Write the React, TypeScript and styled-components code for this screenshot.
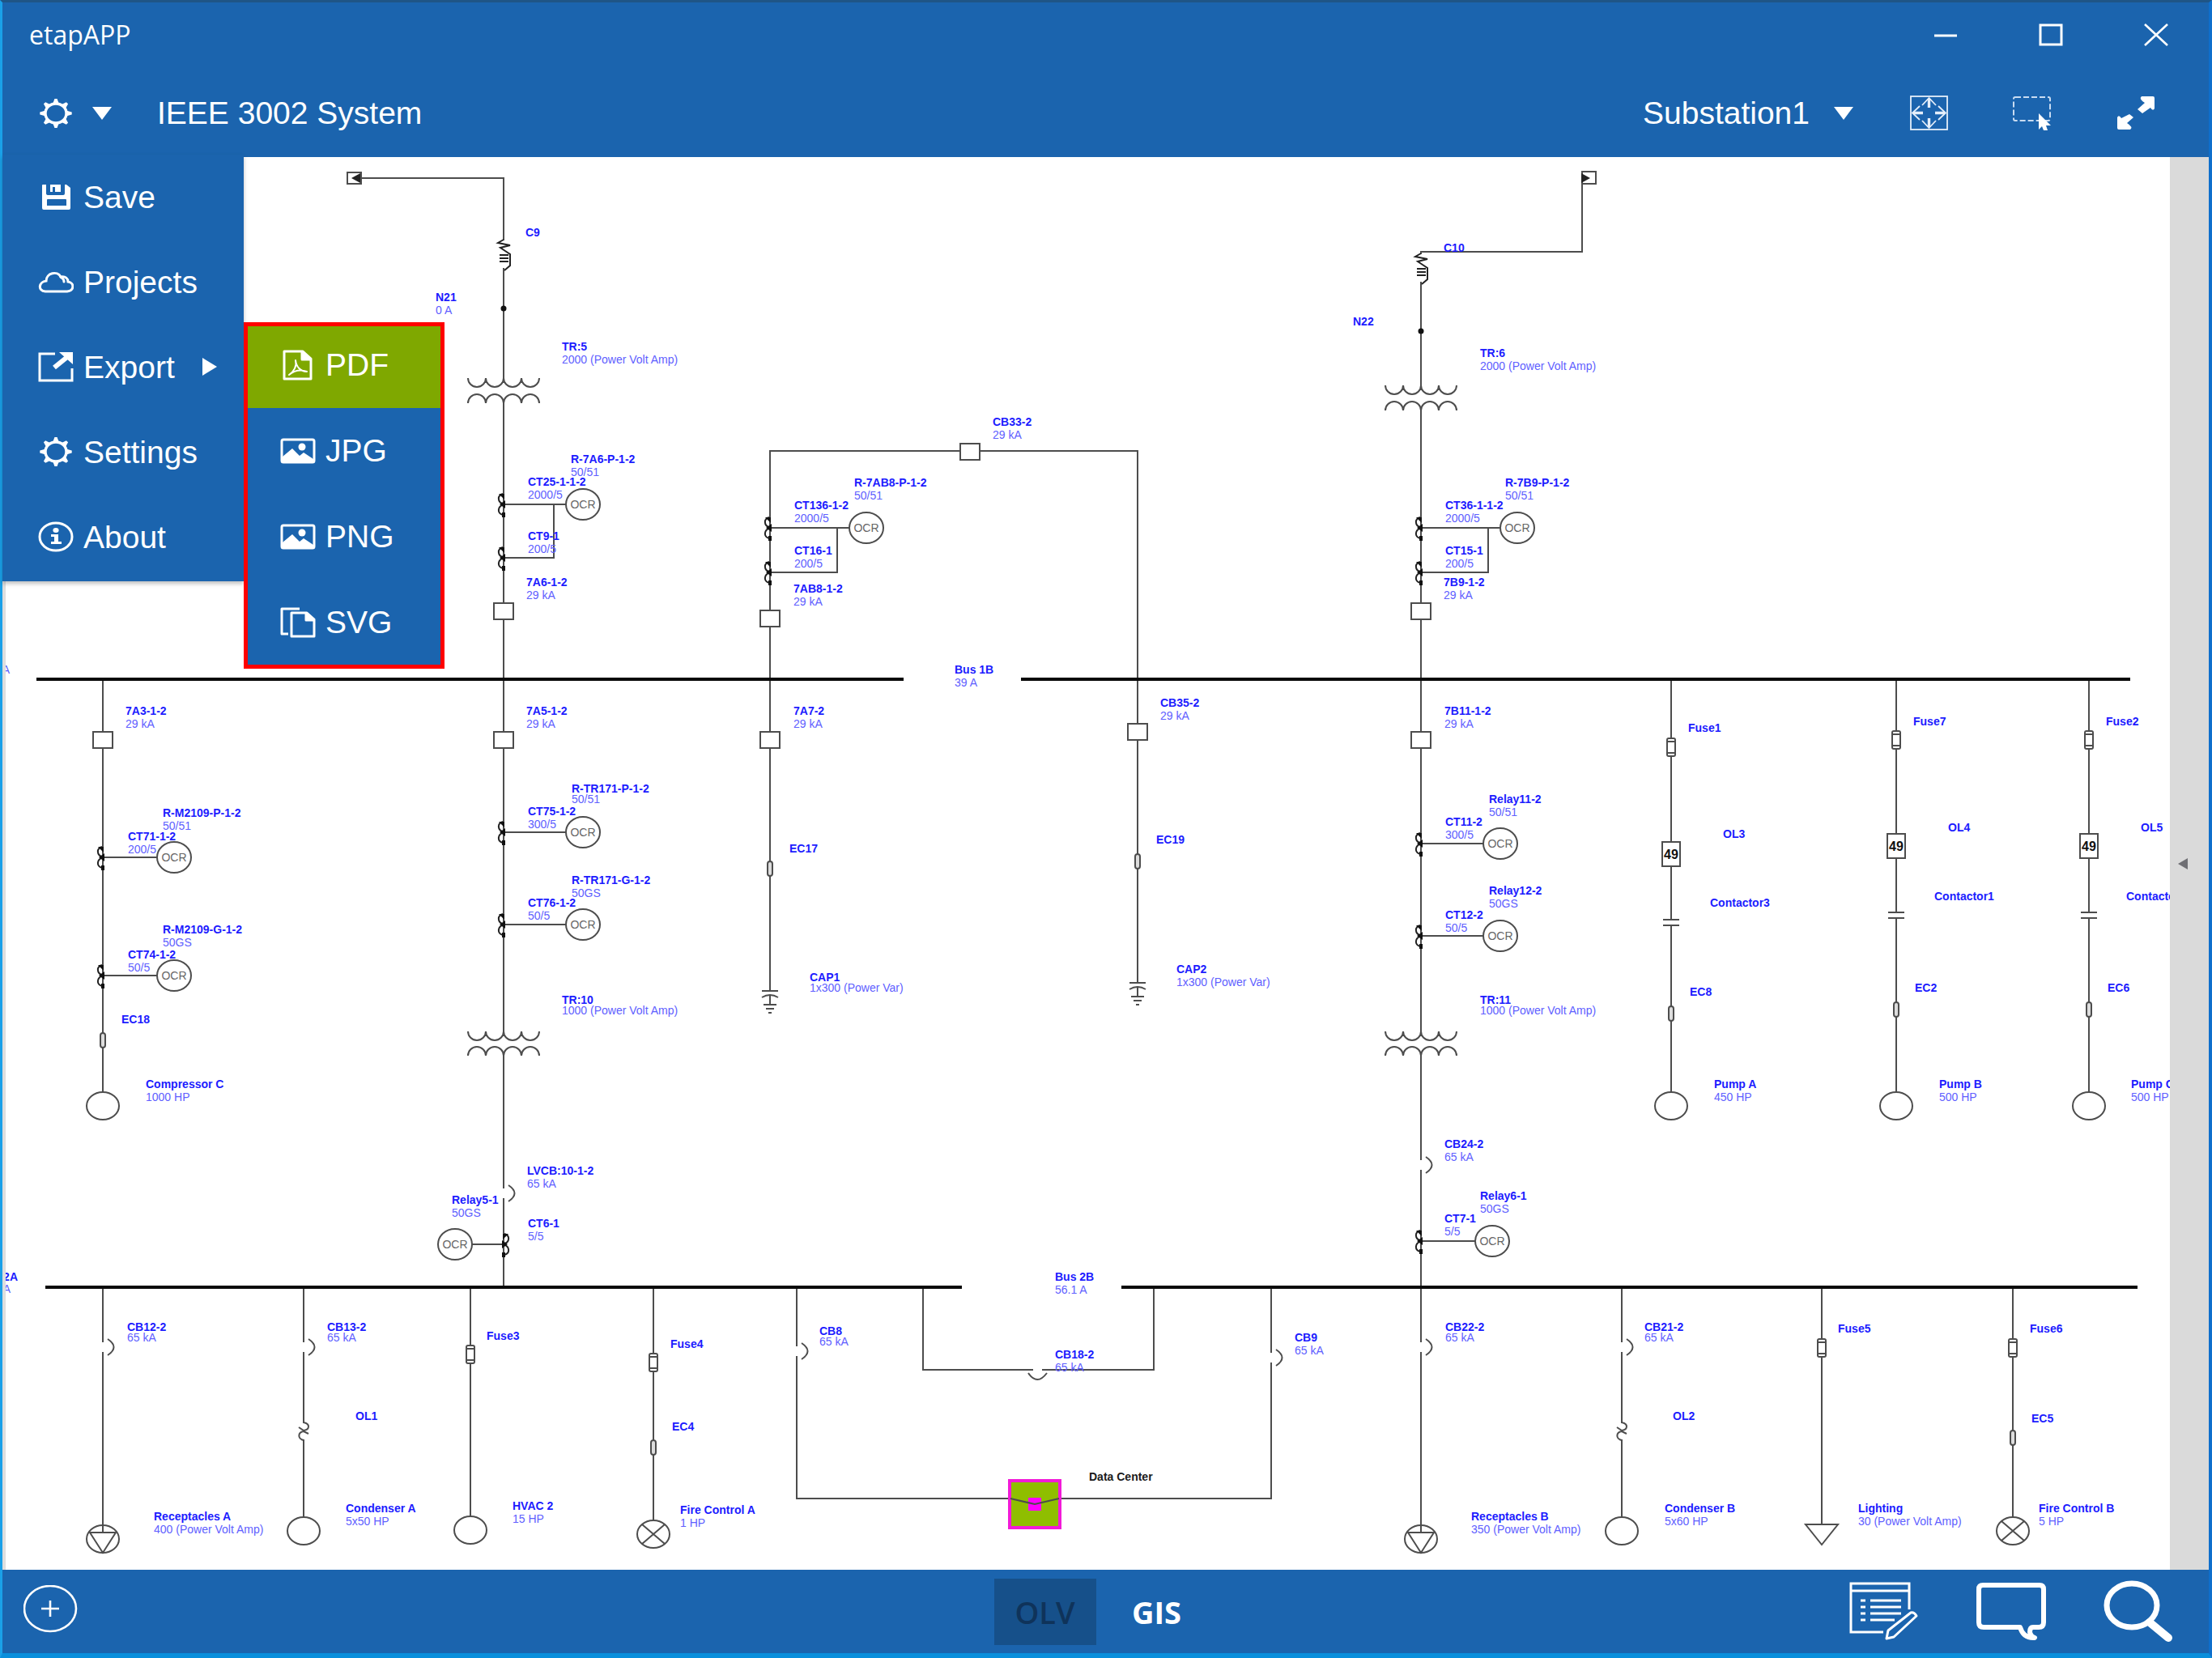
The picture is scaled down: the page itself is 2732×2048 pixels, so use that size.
import React from "react";
import styled, { createGlobalStyle, css } from "styled-components";

const color = {
  brand: "#1b64ae",
  brandDark: "#16508a",
  accent: "#1aa0e8",
  active: "#7fa800",
  mark: "#ff0000",
  wire: "#4d4d4d",
  tag: "#1c1cff",
  value: "#6060ff",
};

const Global = createGlobalStyle`
  *, *::before, *::after { box-sizing: border-box; }
  body { margin: 0; background: #fff; }
  button, select { font: inherit; color: inherit; border: 0; margin: 0; background: none; cursor: pointer; }
  svg { display: block; flex: none; }
`;

/* ---------- Window ---------- */

const Window = styled.div`
  display: grid;
  grid-template-rows: auto auto minmax(0, 1fr) auto;
  height: 100vh;
  border: solid;
  border-width: 3px 4px 6px 3px;
  border-color: #1f5586 #0f6fcc #0a8fdc ${color.accent};
  background: ${color.brand};
  color: #fff;
  font: 39px/1 "Liberation Sans", Arial, sans-serif;
`;

const TitleBar = styled.header`
  display: flex;
  align-items: center;
  justify-content: space-between;
  height: 80px;
  padding-left: 33px;
`;

const AppName = styled.h1`
  margin: 0;
  font: 400 32px/40px "Open Sans", "Noto Sans", sans-serif;
`;

const WindowControls = styled.div`
  display: flex;
`;

const WindowButton = styled.button`
  display: grid;
  place-items: center;
  width: 130px;
  height: 80px;
  padding: 0;
`;

const Toolbar = styled.div`
  display: flex;
  align-items: center;
  height: 111px;
  padding: 2px 66px 0 44px;
`;

const MenuAnchor = styled.nav`
  position: relative;
`;

const GearButton = styled.button`
  display: flex;
  align-items: center;
  gap: 23px;
  height: 102px;
  padding: 0;
`;

const ProjectTitle = styled.h2`
  flex: 1;
  margin: 0 0 0 56px;
  font-size: 39px;
  font-weight: 400;
`;

const Picker = styled.div`
  display: grid;
  align-items: center;
  width: 260px;
  margin-right: 70px;

  > * {
    grid-area: 1 / 1;
  }

  > svg {
    justify-self: end;
    pointer-events: none;
  }
`;

const PickerSelect = styled.select`
  appearance: none;
  width: 100%;
  height: 60px;
  padding: 0;
  outline: 0;
`;

const ToolGroup = styled.div`
  display: flex;
  gap: 80px;
`;

const IconButton = styled.button`
  display: block;
  padding: 0;
`;

/* ---------- Menus ---------- */

const Menu = styled.ul`
  position: absolute;
  z-index: 2;
  top: 100%;
  left: -44px;
  width: 298px;
  margin: 0;
  padding: 0 0 2px;
  list-style: none;
  background: ${color.brand};
  box-shadow: 0 3px 5px rgba(0, 0, 0, 0.25);
`;

const MenuRow = styled.li`
  position: relative;
`;

const itemLayout = css`
  display: flex;
  align-items: center;
  gap: 12px;
  width: 100%;
  text-align: left;
`;

const MenuItem = styled.button`
  ${itemLayout}
  height: 105px;
  padding: 0 33px 0 44px;
`;

const ItemText = styled.span`
  flex: 1;
`;

const Submenu = styled.ul`
  position: absolute;
  top: -3px;
  left: 100%;
  width: 248px;
  margin: 0;
  padding: 0 0 4px;
  list-style: none;
  background: ${color.brand};

  &::after {
    content: "";
    position: absolute;
    inset: 0;
    border: 5px solid ${color.mark};
    pointer-events: none;
  }
`;

const SubmenuItem = styled.button<{ $active?: boolean }>`
  ${itemLayout}
  height: 106px;
  padding: 0 0 0 45px;
  background: ${(p) => (p.$active ? color.active : "transparent")};
`;

/* ---------- Work area ---------- */

const Workspace = styled.main`
  display: flex;
  min-height: 0;
  background: #fff;
`;

const Canvas = styled.div`
  flex: 1;
  min-width: 0;
  border-left: 4px solid #dedede;

  > svg {
    width: 100%;
    height: 100%;
  }
`;

const PanelHandle = styled.button`
  display: flex;
  align-items: center;
  width: 48px;
  padding: 0 10px;
  background: #dadada;
`;

const Tag = styled.text<{ $dark?: boolean }>`
  font: 700 14px "Liberation Sans", Arial, sans-serif;
  fill: ${(p) => (p.$dark ? "#1a1a1a" : color.tag)};
`;

const Value = styled.text`
  font: 400 14px "Liberation Sans", Arial, sans-serif;
  fill: ${color.value};
`;

const RelayText = styled.text`
  font: 400 14px "Liberation Sans", Arial, sans-serif;
  text-anchor: middle;
  fill: #666;
`;

const OverloadText = styled.text`
  font: 700 16px "Liberation Sans", Arial, sans-serif;
  text-anchor: middle;
  fill: #111;
`;

/* ---------- Bottom bar ---------- */

const BottomBar = styled.footer`
  display: grid;
  grid-template-columns: 1fr auto 1fr;
  align-items: center;
  height: 103px;
  padding: 0 26px;
`;

const ViewTabs = styled.div`
  display: flex;
`;

const ViewTab = styled.button<{ $current?: boolean }>`
  width: ${(p) => (p.$current ? 126 : 150)}px;
  height: 82px;
  padding: 0;
  font: ${(p) => (p.$current ? 600 : 700)} 38px/1 "Open Sans", "Noto Sans", sans-serif;
  color: ${(p) => (p.$current ? "#0f335a" : "#fff")};
  background: ${(p) => (p.$current ? color.brandDark : "transparent")};
`;

const BottomTools = styled.div`
  display: flex;
  justify-content: flex-end;
  gap: 71px;
  padding-right: 18px;
`;

/* ---------- Icons ---------- */

function GearIcon() {
  const teeth = Array.from({ length: 8 }, (_, i) => {
    const a = (i * Math.PI) / 4;
    const p = (ang: number, r: number) =>
      `${(22 + Math.cos(ang) * r * 1.1).toFixed(1)} ${(18 + Math.sin(ang) * r).toFixed(1)}`;
    return `M${p(a - 0.3, 12)} L${p(a - 0.08, 18)} L${p(a + 0.08, 18)} L${p(a + 0.3, 12)}Z`;
  }).join("");
  return (
    <svg width="44" height="36" viewBox="0 0 44 36" aria-hidden="true">
      <path d={teeth} fill="#fff" />
      <ellipse cx="22" cy="18" rx="13" ry="12" fill="none" stroke="#fff" strokeWidth="3.4" />
    </svg>
  );
}

const CaretDown = () => (
  <svg width="24" height="16" viewBox="0 0 24 16" aria-hidden="true">
    <path d="M0 0H24L12 16Z" fill="#fff" />
  </svg>
);

const CaretRight = () => (
  <svg width="18" height="22" viewBox="0 0 18 22" aria-hidden="true">
    <path d="M0 0L18 11L0 22Z" fill="#fff" />
  </svg>
);

const SaveIcon = () => (
  <svg width="44" height="36" viewBox="0 0 44 36" aria-hidden="true">
    <path
      fill="#fff"
      fillRule="evenodd"
      d="M6 3H10V14Q10 16 13 16H31Q33 16 33 14V3H35L40 7V32Q40 34 38 34H7Q5 34 5 32V4Q5 3 6 3ZM11 22V29H35V22Q35 21 34 21H12Q11 21 11 22Z"
    />
    <path fill="#fff" d="M15 3H28V12H21V6H18V12H15Z" />
  </svg>
);

const CloudIcon = () => (
  <svg width="44" height="36" viewBox="0 0 44 36" fill="none" stroke="#fff" strokeWidth="3" strokeLinecap="round" aria-hidden="true">
    <path d="M9 30C-1 29 1 18 10 17C10 7 24 4 28 12C34 11 37 14 37 18C45 19 45 29 36 30Z" />
    <path d="M28 12C31 14 32 16 32 18" />
  </svg>
);

const ExportIcon = () => (
  <svg width="44" height="38" viewBox="0 0 44 38" fill="none" stroke="#fff" strokeWidth="3" aria-hidden="true">
    <path d="M21 3H2V36H42V21" />
    <path d="M20 20L36 7" strokeWidth="6" />
    <path d="M26 1H43V16Z" fill="#fff" stroke="none" />
  </svg>
);

const InfoIcon = () => (
  <svg width="44" height="38" viewBox="0 0 44 38" aria-hidden="true">
    <ellipse cx="22" cy="19" rx="20" ry="17" fill="none" stroke="#fff" strokeWidth="3" />
    <ellipse cx="22" cy="11" rx="3.6" ry="3" fill="#fff" />
    <path d="M16 16H25V25H29V28H16V25H20V19H16Z" fill="#fff" />
  </svg>
);

const PdfIcon = () => (
  <svg width="44" height="38" viewBox="0 0 44 38" fill="none" stroke="#fff" strokeWidth="3" strokeLinejoin="round" aria-hidden="true">
    <path d="M5 2H28L38 11V36H5Z" />
    <path d="M27 2V12H38" fill="#fff" />
    <path d="M19 13C20 21 25 27 33 27C25 24 17 26 11 31C17 27 21 20 19 13Z" strokeWidth="2" />
  </svg>
);

const PictureIcon = () => (
  <svg width="44" height="34" viewBox="0 0 44 34" aria-hidden="true">
    <rect x="2" y="3" width="40" height="28" rx="2" fill="none" stroke="#fff" strokeWidth="3" />
    <circle cx="27" cy="12" r="4.5" fill="#fff" />
    <path d="M3 31V24L15 14L24 23L29 19L41 27V31Z" fill="#fff" />
  </svg>
);

const CopyIcon = () => (
  <svg width="44" height="38" viewBox="0 0 44 38" fill="none" stroke="#fff" strokeWidth="3" strokeLinejoin="round" aria-hidden="true">
    <path d="M10 33H2V2H24" />
    <path d="M14 7H33L42 15V36H14Z" />
    <path d="M32 7V16H42" fill="#fff" />
  </svg>
);

const MinimizeIcon = () => (
  <svg width="30" height="28" viewBox="0 0 30 28" aria-hidden="true">
    <path d="M1 15H29" stroke="#fff" strokeWidth="3" />
  </svg>
);

const MaximizeIcon = () => (
  <svg width="30" height="28" viewBox="0 0 30 28" aria-hidden="true">
    <rect x="2" y="2" width="26" height="24" fill="none" stroke="#fff" strokeWidth="3" />
  </svg>
);

const CloseIcon = () => (
  <svg width="30" height="28" viewBox="0 0 30 28" aria-hidden="true">
    <path d="M1 1L29 27M29 1L1 27" stroke="#fff" strokeWidth="2.6" />
  </svg>
);

const FitIcon = () => (
  <svg width="47" height="43" viewBox="0 0 47 43" fill="none" stroke="#e4eefa" strokeWidth="1.8" aria-hidden="true">
    <rect x="1" y="1" width="45" height="41" />
    <path d="M15 12L23.5 3L32 12M15 31L23.5 40L32 31M12 13L3 21.5L12 30M35 13L44 21.5L35 30" />
    <path d="M23.5 4V15M23.5 28V39M4 21.5H16M31 21.5H43" strokeWidth="3.4" />
  </svg>
);

const MarqueeIcon = () => (
  <svg width="48" height="44" viewBox="0 0 48 44" aria-hidden="true">
    <rect x="1" y="2" width="45" height="29" rx="2" fill="none" stroke="#c9dcf2" strokeWidth="2" strokeDasharray="7 3" />
    <path d="M32 22L47 37L41 37L43 43L38 43L36 38L32 42Z" fill="#fff" />
  </svg>
);

const ExpandIcon = () => (
  <svg width="48" height="43" viewBox="0 0 48 43" aria-hidden="true">
    <path d="M31 1H45Q47 1 47 3V16Q45 20 42 15L32 22L26 17L35 9Q27 4 31 1Z" fill="#fff" />
    <path d="M17 42H3Q1 42 1 40V27Q3 23 6 28L16 23L21 27L13 34Q21 39 17 42Z" fill="#fff" />
  </svg>
);

const AddIcon = () => (
  <svg width="68" height="66" viewBox="0 0 68 66" fill="none" stroke="#fff" aria-hidden="true">
    <ellipse cx="33" cy="29" rx="32" ry="28" strokeWidth="2.6" />
    <path d="M22 29H44M33 19V39" strokeWidth="2.6" />
  </svg>
);

const NotesIcon = () => (
  <svg width="86" height="74" viewBox="0 0 86 74" fill="none" stroke="#fff" strokeWidth="3" aria-hidden="true">
    <path d="M42 62H2V2H74V34M2 11H74" />
    <path d="M14 23H20M14 31H20M14 39H20M14 47H20M26 23H64M26 31H64M26 39H64M26 47H56" />
    <path d="M46 70L48 60L76 38Q80 37 83 42L55 68Z" strokeLinejoin="round" />
  </svg>
);

const ChatIcon = () => (
  <svg width="86" height="74" viewBox="0 0 86 74" fill="none" stroke="#fff" strokeWidth="6" strokeLinejoin="round" aria-hidden="true">
    <path d="M8 4H78Q83 4 83 9V50Q83 56 77 56H70Q66 56 66 62Q67 67 72 69Q58 70 54 56H9Q3 56 3 50V9Q3 4 8 4Z" />
  </svg>
);

const SearchIcon = () => (
  <svg width="86" height="78" viewBox="0 0 86 78" fill="none" stroke="#fff" strokeLinecap="round" aria-hidden="true">
    <ellipse cx="35" cy="31" rx="31" ry="27" strokeWidth="7" />
    <path d="M57 52L80 71" strokeWidth="10" />
  </svg>
);

/* ---------- One-line diagram ---------- */

type Point = { x: number; y: number };

const wires = [
  "M438 220H622V467M622 498V1274M622 1304V1589",
  "M951 1223V557H1405V1214",
  "M1954 220V311H1755V476M1755 507V1274M1755 1304V1891",
  "M622 623H699M684 623V689H622M622 1028H699M622 1142H699M583 1537H622",
  "M951 652H1049M1034 652V707H951",
  "M1755 652H1852M1838 652V707H1755M1755 1042H1832M1755 1156H1832M1755 1533H1822",
  "M127 839V1348M127 1059H194M127 1205H194",
  "M2064 839V1348M2342 839V1348M2580 839V1348",
  "M127 1589V1891M375 1589V1874M581 1589V1872M807 1589V1877",
  "M984 1589V1851H1246M1310 1851H1570V1589",
  "M1140 1589V1692H1425V1589",
  "M2003 1589V1874M2250 1589V1883M2486 1589V1874",
];

const buses = ["M45 839H1116", "M1261 839H2631", "M56 1590H1188", "M1385 1590H2640"];

const breakers: Point[] = [
  { x: 622, y: 755 }, { x: 951, y: 764 }, { x: 1755, y: 755 }, { x: 1198, y: 558 },
  { x: 127, y: 914 }, { x: 622, y: 914 }, { x: 951, y: 914 }, { x: 1405, y: 904 }, { x: 1755, y: 914 },
];

const transformers: { x: number; top: number; gap: number }[] = [
  { x: 622, top: 467, gap: 31 }, { x: 1755, top: 476, gap: 31 },
  { x: 622, top: 1274, gap: 30 }, { x: 1755, top: 1274, gap: 30 },
];

const cts: (Point & { flip?: boolean })[] = [
  { x: 622, y: 623 }, { x: 622, y: 689 }, { x: 951, y: 652 }, { x: 951, y: 707 },
  { x: 1755, y: 652 }, { x: 1755, y: 707 }, { x: 127, y: 1059 }, { x: 127, y: 1205 },
  { x: 622, y: 1028 }, { x: 622, y: 1142 }, { x: 1755, y: 1042 }, { x: 1755, y: 1156 },
  { x: 622, y: 1537, flip: true }, { x: 1755, y: 1533 },
];

const relays: Point[] = [
  { x: 720, y: 623 }, { x: 1070, y: 652 }, { x: 1874, y: 652 }, { x: 215, y: 1059 }, { x: 215, y: 1205 },
  { x: 720, y: 1028 }, { x: 720, y: 1142 }, { x: 1853, y: 1042 }, { x: 1853, y: 1156 },
  { x: 562, y: 1537 }, { x: 1843, y: 1533 },
];

const lvBreakers: Point[] = [
  { x: 622, y: 1474 }, { x: 1755, y: 1439 }, { x: 127, y: 1664 }, { x: 375, y: 1664 },
  { x: 984, y: 1669 }, { x: 1570, y: 1677 }, { x: 1755, y: 1664 }, { x: 2003, y: 1664 },
];

const cables: Point[] = [
  { x: 127, y: 1285 }, { x: 951, y: 1073 }, { x: 1405, y: 1064 }, { x: 2064, y: 1252 },
  { x: 2342, y: 1247 }, { x: 2580, y: 1247 }, { x: 807, y: 1788 }, { x: 2486, y: 1776 },
];

const fuses: Point[] = [
  { x: 2064, y: 923 }, { x: 2342, y: 914 }, { x: 2580, y: 914 }, { x: 581, y: 1673 },
  { x: 807, y: 1683 }, { x: 2250, y: 1665 }, { x: 2486, y: 1665 },
];

const motors: Point[] = [
  { x: 127, y: 1366 }, { x: 2064, y: 1366 }, { x: 2342, y: 1366 }, { x: 2580, y: 1366 },
  { x: 375, y: 1891 }, { x: 581, y: 1890 }, { x: 2003, y: 1891 },
];

const overloads: Point[] = [{ x: 2064, y: 1055 }, { x: 2342, y: 1045 }, { x: 2580, y: 1045 }];
const contactors: Point[] = [{ x: 2064, y: 1139 }, { x: 2342, y: 1130 }, { x: 2580, y: 1130 }];
const heaters: Point[] = [{ x: 375, y: 1768 }, { x: 2003, y: 1768 }];
const lamps: Point[] = [{ x: 807, y: 1895 }, { x: 2486, y: 1891 }];
const receptacles: Point[] = [{ x: 127, y: 1901 }, { x: 1755, y: 1901 }];
const capacitors: Point[] = [{ x: 951, y: 1224 }, { x: 1405, y: 1214 }];
const cableImpedances: Point[] = [{ x: 622, y: 296 }, { x: 1755, y: 313 }];
const nodes: Point[] = [{ x: 622, y: 381 }, { x: 1755, y: 409 }];

/* x, vertical middle of the name, name, value, distance to the value */
type LabelRow = [number, number, string, string?, number?];

const labels: LabelRow[] = [
  [649, 287, "C9"],
  [538, 367, "N21", "0 A"],
  [694, 428, "TR:5", "2000 (Power Volt Amp)"],
  [705, 567, "R-7A6-P-1-2", "50/51"],
  [652, 595, "CT25-1-1-2", "2000/5"],
  [652, 662, "CT9-1", "200/5"],
  [650, 719, "7A6-1-2", "29 kA"],
  [1055, 596, "R-7AB8-P-1-2", "50/51"],
  [981, 624, "CT136-1-2", "2000/5"],
  [981, 680, "CT16-1", "200/5"],
  [980, 727, "7AB8-1-2", "29 kA"],
  [1226, 521, "CB33-2", "29 kA"],
  [1859, 596, "R-7B9-P-1-2", "50/51"],
  [1785, 624, "CT36-1-1-2", "2000/5"],
  [1785, 680, "CT15-1", "200/5"],
  [1783, 719, "7B9-1-2", "29 kA"],
  [1179, 827, "Bus 1B", "39 A"],
  [1433, 868, "CB35-2", "29 kA"],
  [1784, 878, "7B11-1-2", "29 kA"],
  [1783, 306, "C10"],
  [1671, 397, "N22"],
  [1828, 436, "TR:6", "2000 (Power Volt Amp)"],
  [155, 878, "7A3-1-2", "29 kA"],
  [201, 1004, "R-M2109-P-1-2", "50/51"],
  [158, 1033, "CT71-1-2", "200/5"],
  [201, 1148, "R-M2109-G-1-2", "50GS"],
  [158, 1179, "CT74-1-2", "50/5"],
  [150, 1259, "EC18"],
  [180, 1339, "Compressor C", "1000 HP"],
  [650, 878, "7A5-1-2", "29 kA"],
  [980, 878, "7A7-2", "29 kA"],
  [706, 974, "R-TR171-P-1-2", "50/51", 13],
  [652, 1002, "CT75-1-2", "300/5"],
  [706, 1087, "R-TR171-G-1-2", "50GS"],
  [652, 1115, "CT76-1-2", "50/5"],
  [975, 1048, "EC17"],
  [1428, 1037, "EC19"],
  [1000, 1207, "CAP1", "1x300 (Power Var)", 13],
  [1453, 1197, "CAP2", "1x300 (Power Var)"],
  [694, 1235, "TR:10", "1000 (Power Volt Amp)", 13],
  [1828, 1235, "TR:11", "1000 (Power Volt Amp)", 13],
  [651, 1446, "LVCB:10-1-2", "65 kA"],
  [558, 1482, "Relay5-1", "50GS"],
  [652, 1511, "CT6-1", "5/5"],
  [1839, 987, "Relay11-2", "50/51"],
  [1785, 1015, "CT11-2", "300/5"],
  [1839, 1100, "Relay12-2", "50GS"],
  [1785, 1130, "CT12-2", "50/5"],
  [1784, 1413, "CB24-2", "65 kA"],
  [1828, 1477, "Relay6-1", "50GS"],
  [1784, 1505, "CT7-1", "5/5"],
  [2085, 899, "Fuse1"],
  [2128, 1030, "OL3"],
  [2112, 1115, "Contactor3"],
  [2087, 1225, "EC8"],
  [2117, 1339, "Pump A", "450 HP"],
  [2363, 891, "Fuse7"],
  [2406, 1022, "OL4"],
  [2389, 1107, "Contactor1"],
  [2365, 1220, "EC2"],
  [2395, 1339, "Pump B", "500 HP"],
  [2601, 891, "Fuse2"],
  [2644, 1022, "OL5"],
  [2626, 1107, "Contactor2"],
  [2603, 1220, "EC6"],
  [2632, 1339, "Pump C", "500 HP"],
  [157, 1639, "CB12-2", "65 kA", 13],
  [404, 1639, "CB13-2", "65 kA", 13],
  [601, 1650, "Fuse3"],
  [828, 1660, "Fuse4"],
  [439, 1749, "OL1"],
  [830, 1762, "EC4"],
  [190, 1873, "Receptacles A", "400 (Power Volt Amp)"],
  [427, 1863, "Condenser A", "5x50 HP"],
  [633, 1860, "HVAC 2", "15 HP"],
  [840, 1865, "Fire Control A", "1 HP"],
  [1012, 1644, "CB8", "65 kA", 13],
  [1303, 1577, "Bus 2B", "56.1 A"],
  [1303, 1673, "CB18-2", "65 kA"],
  [1599, 1652, "CB9", "65 kA"],
  [1785, 1639, "CB22-2", "65 kA", 13],
  [1817, 1873, "Receptacles B", "350 (Power Volt Amp)"],
  [2056, 1863, "Condenser B", "5x60 HP"],
  [2295, 1863, "Lighting", "30 (Power Volt Amp)"],
  [2518, 1863, "Fire Control B", "5 HP"],
  [2031, 1639, "CB21-2", "65 kA", 13],
  [2270, 1641, "Fuse5"],
  [2507, 1641, "Fuse6"],
  [2066, 1749, "OL2"],
  [2509, 1752, "EC5"],
];

const bumps = (down: boolean) => Array.from({ length: 4 }, () => `a11 11 0 0 ${down ? 0 : 1} 22 0`).join("");

function OneLineDiagram() {
  return (
    <svg viewBox="7 194 2673 1745" role="img" aria-label="One-line diagram" fill="none" stroke={color.wire} strokeWidth="2">
      {wires.map((d) => <path key={d} d={d} />)}
      {buses.map((d) => <path key={d} d={d} stroke="#0a0a0a" strokeWidth="4" />)}

      <rect x="429" y="213" width="17" height="14" />
      <path d="M445 214L434 220L445 226Z" fill="#222" stroke="none" />
      <rect x="1954" y="212" width="17" height="15" />
      <path d="M1953 214L1964 220L1953 226Z" fill="#222" stroke="none" />

      {cableImpedances.map(({ x, y }) => (
        <g key={x}>
          <rect x={x - 3} y={y + 1} width="6" height="34" fill="#fff" stroke="none" />
          <path d={`M${x} ${y}l-7 4l15 3l-12 3l6 4l6 4v14l-7 6M${x - 5} ${y + 19}h11m-11 4h11m-11 4h11`} stroke="#222" />
        </g>
      ))}
      {nodes.map(({ x, y }) => <circle key={x} cx={x} cy={y} r="3.5" fill="#111" stroke="none" />)}

      {transformers.map(({ x, top, gap }) => (
        <path key={`${x}-${top}`} d={`M${x - 44} ${top}${bumps(true)}M${x - 44} ${top + gap}${bumps(false)}`} />
      ))}

      {breakers.map(({ x, y }) => <rect key={`${x}-${y}`} x={x - 12} y={y - 10} width="24" height="20" fill="#fff" />)}

      {cts.map(({ x, y, flip }) => (
        <g key={`${x}-${y}`} transform={`translate(${x} ${y}) scale(${flip ? -1 : 1} 1)`}>
          <path d="M-1 -13C-8 -11 -8 -3 0 0C-8 3 -8 11 -1 13" stroke="#222" />
          <path d="M-6 -13H1V-6ZM-5 0L2 -5V5ZM-2 10H2V16H-2Z" fill="#111" stroke="none" />
        </g>
      ))}

      {relays.map(({ x, y }) => (
        <ellipse key={`${x}-${y}`} cx={x} cy={y} rx="21" ry="19" fill="#fff" />
      ))}

      {lvBreakers.map(({ x, y }) => (
        <g key={`${x}-${y}`}>
          <rect x={x - 3} y={y - 6} width="6" height="12" fill="#fff" stroke="none" />
          <path d={`M${x + 6} ${y - 10}Q${x + 21} ${y} ${x + 6} ${y + 10}`} />
        </g>
      ))}
      <rect x="1276" y="1688" width="11" height="8" fill="#fff" stroke="none" />
      <path d="M1270 1696Q1281 1712 1293 1696" />

      {cables.map(({ x, y }) => <rect key={`${x}-${y}`} x={x - 3} y={y - 9} width="6" height="18" rx="3" fill="#ddd" />)}
      {fuses.map(({ x, y }) => (
        <g key={`${x}-${y}`}>
          <rect x={x - 5} y={y - 11} width="10" height="22" rx="2" fill="#fff" />
          <path d={`M${x - 5} ${y - 7}h10M${x - 5} ${y + 7}h10`} />
        </g>
      ))}
      {motors.map(({ x, y }) => <ellipse key={`${x}-${y}`} cx={x} cy={y} rx="20" ry="17" fill="#fff" />)}
      {overloads.map(({ x, y }) => <rect key={x} x={x - 11} y={y - 15} width="22" height="30" fill="#fff" />)}
      {contactors.map(({ x, y }) => (
        <g key={x}>
          <rect x={x - 3} y={y - 3} width="6" height="6" fill="#fff" stroke="none" />
          <path d={`M${x - 10} ${y - 3}h20m-20 7h20`} />
        </g>
      ))}
      {heaters.map(({ x, y }) => (
        <g key={x}>
          <rect x={x - 3} y={y - 10} width="6" height="20" fill="#fff" stroke="none" />
          <path d={`M${x} ${y - 11}C${x + 9} ${y - 9} ${x + 7} ${y - 2} ${x} ${y - 1}L${x - 6} ${y - 5}M${x} ${y + 11}C${x - 8} ${y + 9} ${x - 7} ${y + 1} ${x} ${y}L${x + 6} ${y + 3}`} />
        </g>
      ))}
      {lamps.map(({ x, y }) => (
        <g key={x}>
          <ellipse cx={x} cy={y} rx="20" ry="17" fill="#fff" />
          <path d={`M${x - 14} ${y - 12}l28 24m0 -24l-28 24`} />
        </g>
      ))}
      {receptacles.map(({ x, y }) => (
        <g key={x}>
          <ellipse cx={x} cy={y} rx="20" ry="17" fill="#fff" />
          <path d={`M${x - 16} ${y - 8}h32l-16 25ZM${x} ${y - 17}v9`} />
        </g>
      ))}
      <path d="M2230 1883H2270L2250 1908Z" fill="#fff" />
      {capacitors.map(({ x, y }) => (
        <path
          key={x}
          d={`M${x - 10} ${y}h20M${x - 10} ${y + 8}Q${x} ${y + 2} ${x + 10} ${y + 8}M${x} ${y + 5}v12M${x - 8} ${y + 17}h16m-13 5h10m-7 5h4`}
        />
      ))}

      <rect x="1247" y="1829" width="62" height="58" fill="#8fbe00" stroke="#f21ad8" strokeWidth="4" />
      <rect x="1270" y="1850" width="16" height="16" fill="#ff00ff" stroke="none" />
      <path d="M1248 1851L1278 1858L1308 1851" />

      <g stroke="none">
        {relays.map(({ x, y }) => <RelayText key={`${x}-${y}`} x={x} y={y + 5}>OCR</RelayText>)}
        {overloads.map(({ x, y }) => <OverloadText key={x} x={x} y={y + 6}>49</OverloadText>)}
        {labels.map(([x, y, name, value, step = 16]) => (
          <React.Fragment key={`${x}-${y}`}>
            <Tag x={x} y={y + 5}>{name}</Tag>
            {value && <Value x={x} y={y + 5 + step}>{value}</Value>}
          </React.Fragment>
        ))}
        <Tag $dark x="1345" y="1829">Data Center</Tag>
        <Value x="12" y="832" textAnchor="end">A</Value>
        <Tag x="22" y="1582" textAnchor="end">2A</Tag>
        <Value x="13" y="1597" textAnchor="end">A</Value>
      </g>
    </svg>
  );
}

/* ---------- App ---------- */

const exportFormats = [
  { name: "PDF", icon: <PdfIcon />, active: true },
  { name: "JPG", icon: <PictureIcon /> },
  { name: "PNG", icon: <PictureIcon /> },
  { name: "SVG", icon: <CopyIcon /> },
];

export default function App() {
  return (
    <Window>
      <Global />
      <TitleBar>
        <AppName>etapAPP</AppName>
        <WindowControls>
          <WindowButton aria-label="Minimize"><MinimizeIcon /></WindowButton>
          <WindowButton aria-label="Maximize"><MaximizeIcon /></WindowButton>
          <WindowButton aria-label="Close"><CloseIcon /></WindowButton>
        </WindowControls>
      </TitleBar>

      <Toolbar>
        <MenuAnchor>
          <GearButton aria-label="Main menu" aria-expanded="true">
            <GearIcon />
            <CaretDown />
          </GearButton>
          <Menu>
            <MenuRow><MenuItem><SaveIcon /><ItemText>Save</ItemText></MenuItem></MenuRow>
            <MenuRow><MenuItem><CloudIcon /><ItemText>Projects</ItemText></MenuItem></MenuRow>
            <MenuRow>
              <MenuItem aria-expanded="true"><ExportIcon /><ItemText>Export</ItemText><CaretRight /></MenuItem>
              <Submenu>
                {exportFormats.map((f) => (
                  <li key={f.name}>
                    <SubmenuItem $active={f.active}>{f.icon}<ItemText>{f.name}</ItemText></SubmenuItem>
                  </li>
                ))}
              </Submenu>
            </MenuRow>
            <MenuRow><MenuItem><GearIcon /><ItemText>Settings</ItemText></MenuItem></MenuRow>
            <MenuRow><MenuItem><InfoIcon /><ItemText>About</ItemText></MenuItem></MenuRow>
          </Menu>
        </MenuAnchor>
        <ProjectTitle>IEEE 3002 System</ProjectTitle>
        <Picker>
          <PickerSelect aria-label="Presentation" defaultValue="Substation1">
            <option>Substation1</option>
          </PickerSelect>
          <CaretDown />
        </Picker>
        <ToolGroup>
          <IconButton aria-label="Zoom to fit"><FitIcon /></IconButton>
          <IconButton aria-label="Zoom to selection"><MarqueeIcon /></IconButton>
          <IconButton aria-label="Full screen"><ExpandIcon /></IconButton>
        </ToolGroup>
      </Toolbar>

      <Workspace>
        <Canvas><OneLineDiagram /></Canvas>
        <PanelHandle aria-label="Open side panel">
          <svg width="14" height="14" viewBox="0 0 14 14" aria-hidden="true">
            <path d="M0 7L12 0V14Z" fill="#6f6f74" />
          </svg>
        </PanelHandle>
      </Workspace>

      <BottomBar>
        <IconButton aria-label="Add"><AddIcon /></IconButton>
        <ViewTabs>
          <ViewTab $current>OLV</ViewTab>
          <ViewTab>GIS</ViewTab>
        </ViewTabs>
        <BottomTools>
          <IconButton aria-label="Notes"><NotesIcon /></IconButton>
          <IconButton aria-label="Comments"><ChatIcon /></IconButton>
          <IconButton aria-label="Search"><SearchIcon /></IconButton>
        </BottomTools>
      </BottomBar>
    </Window>
  );
}
